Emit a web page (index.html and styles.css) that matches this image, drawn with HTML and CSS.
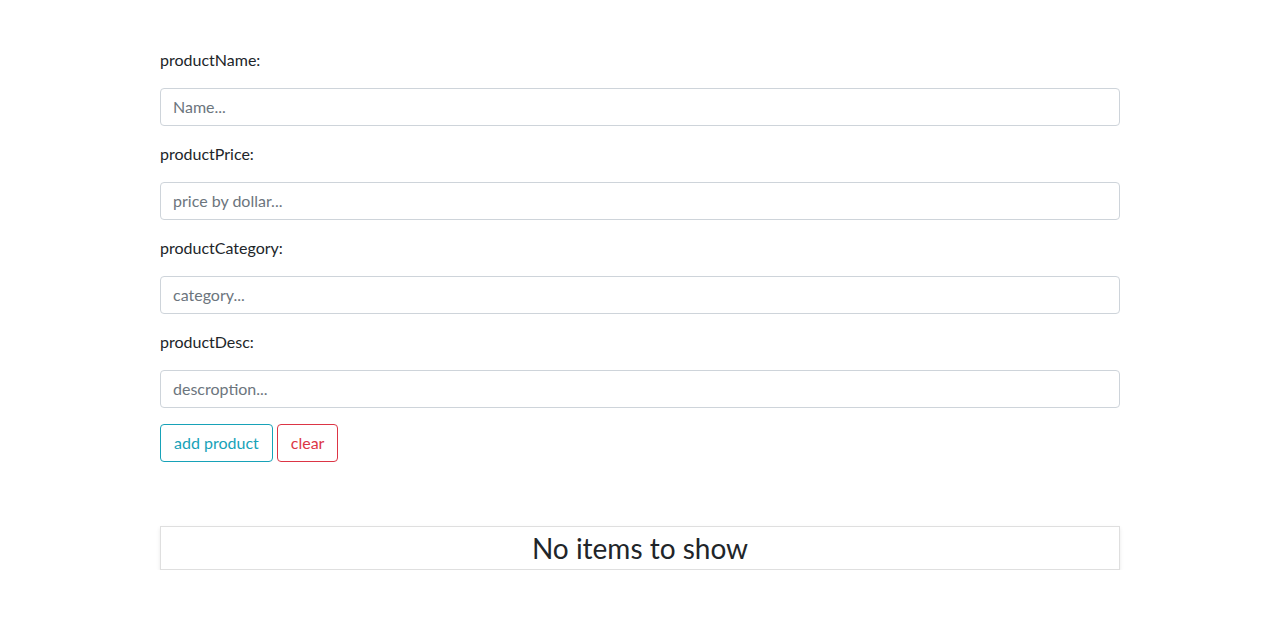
FILE: index.html
```html
<!DOCTYPE html>
<html lang="en">
<head>
<meta charset="utf-8">
<title>Products</title>
<link rel="stylesheet" href="styles.css">
</head>
<body>
<div class="container">
  <form class="product-form">
    <div class="field">
      <label class="field-label" for="pn">productName:</label>
      <input class="field-input" id="pn" type="text" placeholder="Name...">
    </div>
    <div class="field">
      <label class="field-label" for="pp">productPrice:</label>
      <input class="field-input" id="pp" type="text" placeholder="price by dollar...">
    </div>
    <div class="field">
      <label class="field-label" for="pc">productCategory:</label>
      <input class="field-input" id="pc" type="text" placeholder="category...">
    </div>
    <div class="field">
      <label class="field-label" for="pd">productDesc:</label>
      <input class="field-input" id="pd" type="text" placeholder="descroption...">
    </div>
    <div class="actions">
      <button type="button" class="btn btn-info">add product</button>
      <button type="button" class="btn btn-danger">clear</button>
    </div>
  </form>
  <div class="empty-card">
    <h3 class="empty-title">No items to show</h3>
  </div>
</div>
</body>
</html>
```

FILE: styles.css
```css
* { box-sizing: border-box; }
html, body {
  margin: 0;
  background: #fff;
  font-family: "Segoe UI", Lato, "Open Sans", sans-serif;
  font-size: 16px;
  line-height: 1.5;
  color: #212529;
}
.container {
  width: 960px;
  margin: 0 auto;
  padding-top: 48px;
}
.product-form {
  display: flex;
  flex-direction: column;
  gap: 16px;
}
.field {
  display: flex;
  flex-direction: column;
  gap: 16px;
}
.field-label {
  display: block;
  height: 24px;
  line-height: 24px;
}
.field-input {
  display: block;
  width: 100%;
  height: 38px;
  padding: 5px 12px 7px;
  font: inherit;
  color: #495057;
  background: #fff;
  border: 1px solid #ced4da;
  border-radius: 4px;
  outline: none;
}
.field-input::placeholder { color: #6c757d; opacity: 1; }
.actions {
  display: flex;
  gap: 4px;
}
.btn {
  height: 38px;
  padding: 6px 13px;
  font: inherit;
  line-height: 24px;
  background: transparent;
  border: 1px solid;
  border-radius: 4px;
  cursor: pointer;
}
.btn-info { color: #17a2b8; border-color: #17a2b8; }
.btn-danger { color: #dc3545; border-color: #dc3545; }
.empty-card {
  margin-top: 64px;
  border: 1px solid rgba(0,0,0,.125);
  box-shadow: 0 2px 4px rgba(0,0,0,.09);
  text-align: center;
}
.empty-title {
  margin: 0;
  font-size: 28px;
  font-weight: 400;
  line-height: 42px;
}
```
